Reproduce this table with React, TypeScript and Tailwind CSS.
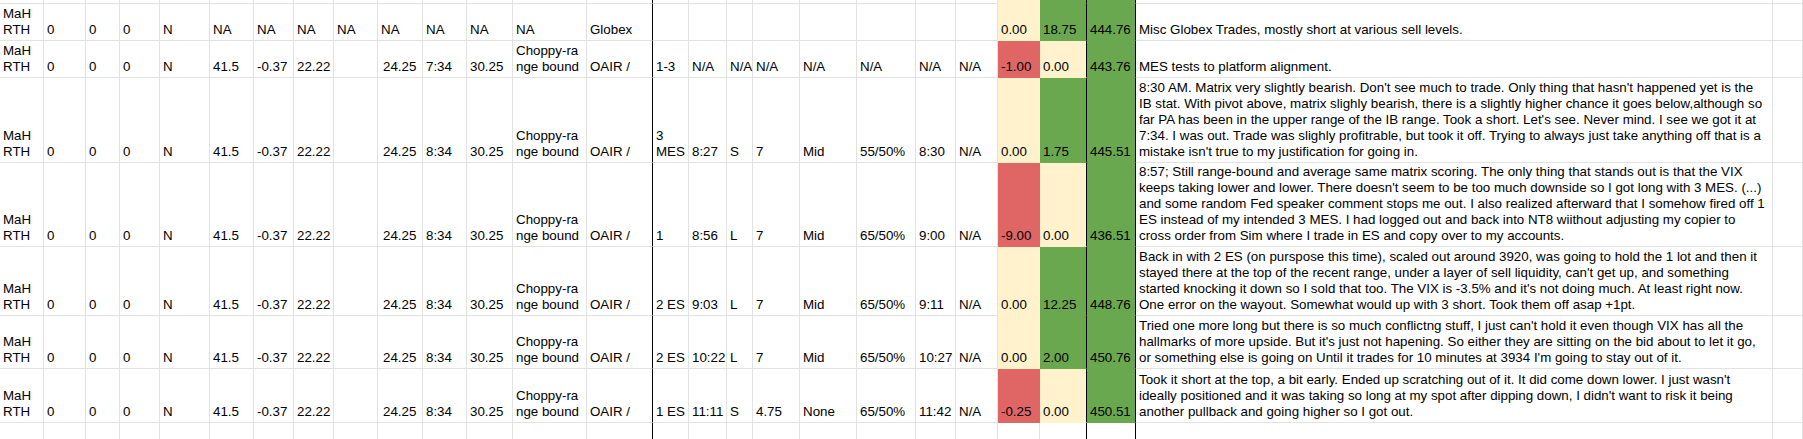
import React from 'react'

type Fill = 'y' | 'r' | 'g' | undefined

type Cell = {
  lines: string[]
  fill?: Fill
  pad?: string
}

// column widths in px, matched to the gridlines of the sheet
const widths = [
  44, 42, 34, 40, 50, 44, 40, 40, 44, 45, 44, 46, 74, 66, 36, 38, 26, 47, 57, 59, 40, 42, 42, 47, 49, 637, 30,
]

// columns whose right edge is a thick black rule
const blackRight = new Set([13, 23, 24])

const rowHeights = ['h-[4px]', 'h-[37px]', 'h-[37px]', 'h-[85px]', 'h-[84px]', 'h-[69px]', 'h-[53px]', 'h-[54px]', 'h-[22px]']

const fillClass: Record<string, string> = {
  y: 'bg-[#fff2cc] border-[#fff2cc]',
  r: 'bg-[#e06666] border-[#e06666]',
  g: 'bg-[#6aa84f] border-[#6aa84f]',
}

const t = (s: string): Cell => ({ lines: s.split('\n') })
const f = (s: string, fill: Fill): Cell => ({ lines: [s], fill })
const e: Cell = { lines: [] }

function tradeRow(
  entry: string[],
  a: string,
  b: string,
  c: string,
  d: string,
  pct: string,
  exit: string,
  loss: [string, Fill],
  gain: [string, Fill],
  total: string,
  notes: string[],
): Cell[] {
  return [
    t('MaH\nRTH'),
    t('0'),
    t('0'),
    t('0'),
    t('N'),
    t('41.5'),
    t('-0.37'),
    t('22.22'),
    e,
    { lines: ['24.25'], pad: 'pl-[5px]' },
    t(entry[0]),
    t('30.25'),
    t('Choppy-ra\nnge bound'),
    t('OAIR /'),
    { lines: entry[1].split('\n') },
    t(a),
    t(b),
    t(c),
    t(d),
    t(pct),
    t(exit),
    t('N/A'),
    f(loss[0], loss[1]),
    f(gain[0], gain[1]),
    f(total, 'g'),
    { lines: notes },
    e,
  ]
}

const rows: Cell[][] = [
  widths.map((_, i) => (i === 22 ? f('', 'y') : i === 23 || i === 24 ? f('', 'g') : e)),
  [
    t('MaH\nRTH'),
    t('0'),
    t('0'),
    t('0'),
    t('N'),
    t('NA'),
    t('NA'),
    t('NA'),
    t('NA'),
    t('NA'),
    t('NA'),
    t('NA'),
    t('NA'),
    t('Globex'),
    e,
    e,
    e,
    e,
    e,
    e,
    e,
    e,
    f('0.00', 'y'),
    f('18.75', 'g'),
    f('444.76', 'g'),
    t('Misc Globex Trades, mostly short at various sell levels.'),
    e,
  ],
  [
    t('MaH\nRTH'),
    t('0'),
    t('0'),
    t('0'),
    t('N'),
    t('41.5'),
    t('-0.37'),
    t('22.22'),
    e,
    { lines: ['24.25'], pad: 'pl-[5px]' },
    t('7:34'),
    t('30.25'),
    t('Choppy-ra\nnge bound'),
    t('OAIR /'),
    t('1-3'),
    t('N/A'),
    t('N/A'),
    t('N/A'),
    t('N/A'),
    t('N/A'),
    t('N/A'),
    t('N/A'),
    f('-1.00', 'r'),
    f('0.00', 'y'),
    f('443.76', 'g'),
    t('MES tests to platform alignment.'),
    e,
  ],
  tradeRow(['8:34', '3\nMES'], '8:27', 'S', '7', 'Mid', '55/50%', '8:30', ['0.00', 'y'], ['1.75', 'g'], '445.51', [
    "8:30 AM. Matrix very slightly bearish. Don't see much to trade. Only thing that hasn't happened yet is the",
    'IB stat. With pivot above, matrix slighly bearish, there is a slightly higher chance it goes below,although so',
    "far PA has been in the upper range of the IB range. Took a short. Let's see. Never mind. I see we got it at",
    '7:34. I was out. Trade was slighly profitrable, but took it off. Trying to always just take anything off that is a',
    "mistake isn't true to my justification for going in.",
  ]),
  tradeRow(['8:34', '1'], '8:56', 'L', '7', 'Mid', '65/50%', '9:00', ['-9.00', 'r'], ['0.00', 'y'], '436.51', [
    '8:57; Still range-bound and average same matrix scoring. The only thing that stands out is that the VIX',
    "keeps taking lower and lower. There doesn't seem to be too much downside so I got long with 3 MES. (...)",
    'and some random Fed speaker comment stops me out. I also realized afterward that I somehow fired off 1',
    'ES instead of my intended 3 MES. I had logged out and back into NT8 wiithout adjusting my copier to',
    'cross order from Sim where I trade in ES and copy over to my accounts.',
  ]),
  tradeRow(['8:34', '2 ES'], '9:03', 'L', '7', 'Mid', '65/50%', '9:11', ['0.00', 'y'], ['12.25', 'g'], '448.76', [
    'Back in with 2 ES (on purspose this time), scaled out around 3920, was going to hold the 1 lot and then it',
    "stayed there at the top of the recent range, under a layer of sell liquidity, can't get up, and something",
    "started knocking it down so I sold that too. The VIX is -3.5% and it's not doing much. At least right now.",
    'One error on the wayout. Somewhat would up with 3 short. Took them off asap +1pt.',
  ]),
  tradeRow(['8:34', '2 ES'], '10:22', 'L', '7', 'Mid', '65/50%', '10:27', ['0.00', 'y'], ['2.00', 'g'], '450.76', [
    "Tried one more long but there is so much conflictng stuff, I just can't hold it even though VIX has all the",
    "hallmarks of more upside. But it's just not hapening. So either they are sitting on the bid about to let it go,",
    "or something else is going on Until it trades for 10 minutes at 3934 I'm going to stay out of it.",
  ]),
  tradeRow(['8:34', '1 ES'], '11:11', 'S', '4.75', 'None', '65/50%', '11:42', ['-0.25', 'r'], ['0.00', 'y'], '450.51', [
    "Took it short at the top, a bit early. Ended up scratching out of it. It did come down lower. I just wasn't",
    "ideally positioned and it was taking so long at my spot after dipping down, I didn't want to risk it being",
    'another pullback and going higher so I got out.',
  ]),
  widths.map(() => e),
]

function SheetCell({ cell, col }: { cell: Cell; col: number }) {
  const fill = cell.fill ? fillClass[cell.fill] : 'border-[#e2e2e2]'
  const right = blackRight.has(col) ? 'border-r-black' : ''
  return (
    <div
      className={`flex shrink-0 flex-col justify-end overflow-visible border-r border-b pb-[2px] ${cell.pad ?? 'pl-[3px]'} ${fill} ${right}`}
      style={{ width: widths[col] }}
    >
      {cell.lines.map((line, i) => (
        <div key={i} className="whitespace-nowrap leading-[16px]">
          {line}
        </div>
      ))}
    </div>
  )
}

export default function App() {
  return (
    <div
      className="h-[439px] w-[1803px] overflow-hidden bg-white text-[13.33px] text-black"
      style={{ fontFamily: '"Liberation Sans", Arial, sans-serif' }}
    >
      {rows.map((row, r) => (
        <div key={r} className={`flex ${rowHeights[r]}`}>
          {row.map((cell, c) => (
            <SheetCell key={c} cell={cell} col={c} />
          ))}
        </div>
      ))}
    </div>
  )
}
